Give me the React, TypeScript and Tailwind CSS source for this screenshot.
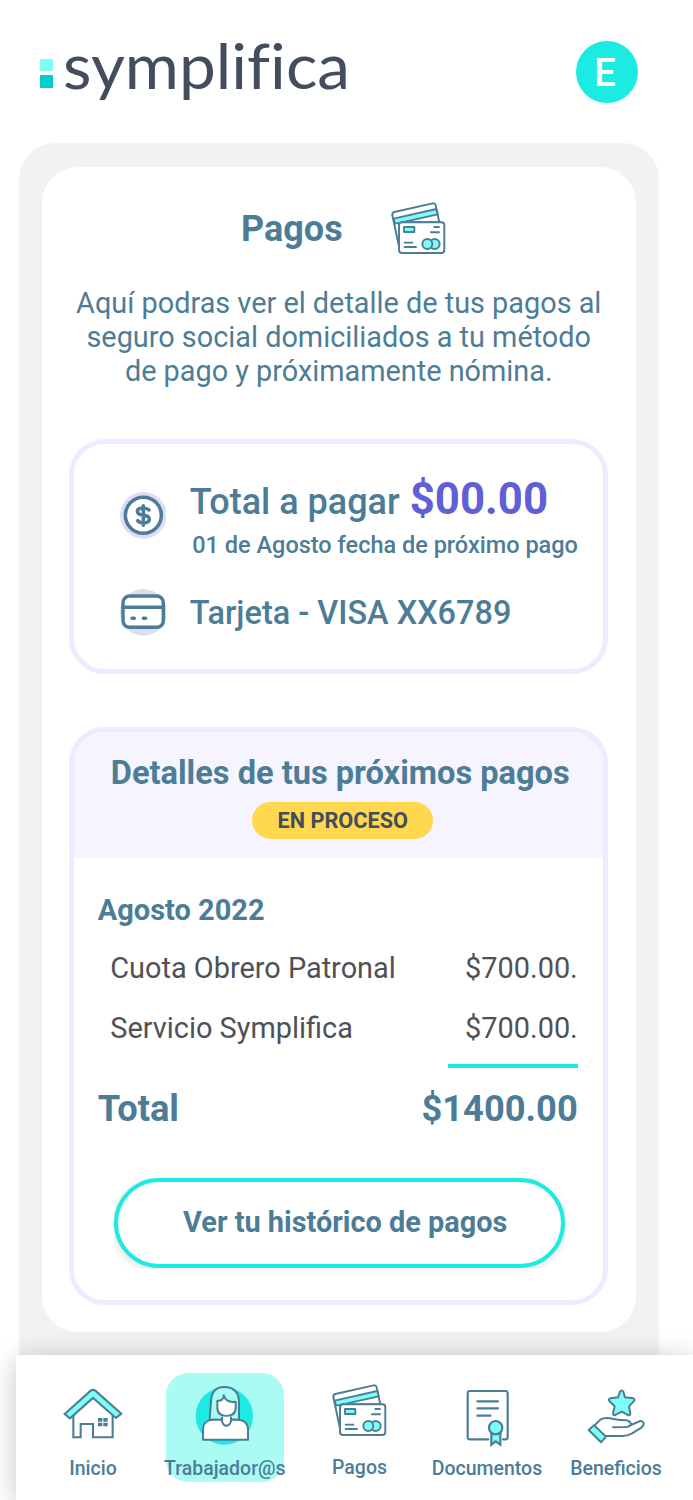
import type { ReactNode } from "react"

function CardsIcon() {
  return (
    <svg viewBox="33 36 165 157" className="w-[55px] h-[52.3px]" fill="none" stroke="#4d7d96" strokeWidth="5.8" strokeLinecap="round" strokeLinejoin="round">
      <path d="M60 184 L37 76 Q36 68 43 66 L158 40 Q165 39 167 46 L178 97 L57 97 Z" fill="#fff" />
      <path d="M41 86 L169 57 L173 73 L62 98 L45 101 Z" fill="#7dfff5" />
      <rect x="57" y="97" width="136" height="92" rx="9" fill="#fff" />
      <rect x="72" y="111" width="31" height="15" fill="#7dfff5" />
      <path d="M163 111 H177 M153 127 H177 M74 158 H97 M74 171 H108" />
      <circle cx="164" cy="162" r="15" fill="#7dfff5" />
      <circle cx="142" cy="162" r="15" fill="#7dfff5" />
    </svg>
  )
}

function HomeIcon() {
  return (
    <svg viewBox="190 262 180 154" className="w-[60px] h-[51.3px]" fill="none" stroke="#4d7d96" strokeWidth="6.2">
      <path d="M221 343 V410 H243 V370 H280 V410 H339 V343" />
      <path d="M195 340 L273 270 Q280 265 287 270 L365 339 L349 352 L280 292 L211 353 Z" fill="#7dfff5" />
      <path d="M295 352 H308 V363 H295 Z M311 352 H324 V363 H311 Z M295 366 H308 V377 H295 Z M311 366 H324 V377 H311 Z" fill="#4d7d96" stroke="none" />
    </svg>
  )
}

function WorkerIcon() {
  return (
    <svg viewBox="120 74 176 182" className="w-[58.7px] h-[60.7px]" fill="none" stroke="#4d7d96" strokeWidth="6" strokeLinejoin="round">
      <circle cx="208" cy="167" r="86" fill="#1cebe3" stroke="none" />
      <path d="M164 178 L168 121 C170 93 185 80 207 80 C235 80 250 94 252 121 V178 Z" fill="#a9fbf4" />
      <path d="M187 121 C198 123 207 116 206 105 C211 120 224 127 242 124 V146 C240 160 230 167 214 167 C199 167 189 160 187 146 Z" fill="#fff" />
      <path d="M144 238 V207 C144 188 157 178 174 178 H201 C201 187 206 195 214 196 C222 195 228 187 228 178 H247 C266 178 279 189 279 207 V238 Z" fill="#fff" />
      <path d="M201 169 V178 C201 187 206 195 214 196 C222 195 228 187 228 178 V169" fill="#fff" />
    </svg>
  )
}

function DocumentIcon() {
  return (
    <svg viewBox="124 88 132 176" className="w-[44px] h-[58.7px]" fill="none" stroke="#4d7d96" strokeWidth="6.6" strokeLinecap="round">
      <path d="M191 239 H135 Q129 239 129 233 V101 Q129 94 136 94 H242 Q249 94 249 101 V233 Q249 239 243 239 H235" />
      <path d="M158 125 H220 M158 146 H220 M158 168 H197" />
      <path d="M200 218 V255 L213 245 L227 255 V218 Z" fill="#7dfff5" />
      <circle cx="213" cy="204" r="20" fill="#7dfff5" />
    </svg>
  )
}

function BenefitsIcon() {
  return (
    <svg viewBox="98 266 176 166" className="w-[58.7px] h-[55.3px]" fill="none" stroke="#4d7d96" strokeWidth="6" strokeLinecap="round" strokeLinejoin="round">
      <path d="M197 274 Q202 267 207 274 L212 291 L237 294 Q244 297 238 303 L224 318 L228 340 Q227 347 220 344 L202 334 L183 344 Q176 346 176 339 L181 318 L165 302 Q161 296 168 294 L191 291 Z" fill="#7dfff5" />
      <path d="M121 375 L138 358 Q149 351 166 354 C184 357 195 360 216 360 Q229 362 230 374 L255 363 Q264 360 268 368 Q269 376 260 383 L232 400 Q219 407 205 407 H155" />
      <path d="M176 381 L216 380 Q228 379 230 372" />
      <path d="M103 389 L119 375 L155 409 L140 426 Z" fill="#7dfff5" />
    </svg>
  )
}

function DollarIcon() {
  return (
    <svg viewBox="179 185 140 140" className="w-[46.7px] h-[46.7px]" fill="none" stroke="#4d7d96" strokeWidth="10.5" strokeLinecap="round" strokeLinejoin="round">
      <circle cx="249" cy="255" r="70" fill="#dfdcf6" stroke="none" />
      <circle cx="249" cy="255" r="54" fill="#fff" />
      <path d="M266 239 C260 233 255 233 249 233 C237 233 231 237 231 243 C231 251 239 254 249 255 C260 256 267 260 267 267 C267 274 260 278 249 278 C241 278 236 276 232 271 M249 226 V285" />
    </svg>
  )
}

function CreditCardIcon() {
  return (
    <svg viewBox="179 477 140 140" className="w-[46.7px] h-[46.7px]" fill="none" stroke="#4d7d96" strokeWidth="10.5" strokeLinecap="round">
      <circle cx="249" cy="547" r="70" fill="#dfdcf6" stroke="none" />
      <rect x="188" y="498" width="121" height="94" rx="20" fill="#fff" />
      <path d="M188 532 H309 M215 565 H222 M249 565 H256" />
    </svg>
  )
}

function NavItem({ label, icon, className, iconClass }: { label: string; icon: ReactNode; className: string; iconClass: string }) {
  return (
    <a href="#" className={`flex h-[109px] shrink-0 flex-col items-center ${className}`}>
      <div className={`flex h-[82px] shrink-0 ${iconClass}`}>{icon}</div>
      <span className="whitespace-nowrap text-[19.5px] leading-[28px] font-medium">{label}</span>
    </a>
  )
}

const payments = [
  { name: "Cuota Obrero Patronal", amount: "$700.00." },
  { name: "Servicio Symplifica", amount: "$700.00." },
]

export default function App() {
  return (
    <div className="flex h-[1500px] w-[693px] flex-col overflow-hidden bg-white font-['Roboto',sans-serif] text-[#4d7d96]">
      <header className="flex h-[142.5px] shrink-0 items-start justify-between pl-[40px] pr-[55.5px]">
        <div className="flex items-start">
          <div className="mt-[59px] flex flex-col gap-[4px]">
            <span className="h-[12.3px] w-[12.7px] rounded-[1px] bg-[#7dfff5]" />
            <span className="h-[12.7px] w-[12.7px] rounded-[1px] bg-[#00cdcd]" />
          </div>
          <svg className="mt-[14px] ml-[8px] h-[110px] w-[300px]">
            <text
              x="2"
              y="75"
              textLength="287"
              lengthAdjust="spacingAndGlyphs"
              fontSize="62"
              fill="#434d5e"
              className="font-['Lato',sans-serif] [font-variant-ligatures:none]"
            >
              symplifica
            </text>
          </svg>
        </div>
        <div className="mt-[41px] flex h-[62px] w-[62px] items-center justify-center rounded-full bg-[#1cebe3] pt-[2px] pr-[3px] text-[38px] font-medium text-white">
          E
        </div>
      </header>

      <main className="ml-[18.5px] flex h-[1212.5px] w-[640.5px] shrink-0 flex-col rounded-t-[36px] bg-[#f2f2f2] pt-[24px] pl-[23.5px]">
        <div className="flex h-[1165.5px] w-[593.5px] flex-col items-center rounded-[36px] bg-white">
          <div className="flex h-[88.3px] w-full pl-[199px]">
            <h1 className="mt-[40.5px] w-[150px] text-[36px] leading-[44px] font-bold">Pagos</h1>
            <div className="mt-[35.3px]">
              <CardsIcon />
            </div>
          </div>
          <p className="mt-[31px] text-center text-[28.85px] leading-[34.2px] whitespace-nowrap">
            Aquí podras ver el detalle de tus pagos al
            <br />
            seguro social domiciliados a tu método
            <br />
            de pago y próximamente nómina.
          </p>

          <section className="mt-[51px] h-[234.5px] w-[539px] shrink-0 rounded-[36px] border-[5.5px] border-[#edebff] pl-[45.5px]">
            <div className="flex">
              <div className="mt-[47.5px] w-[70px] shrink-0">
                <DollarIcon />
              </div>
              <div className="mt-[29px] whitespace-nowrap font-medium">
                <div className="flex h-[52px] items-baseline gap-[10px] text-[36px] leading-[52px]">
                  Total a pagar
                  <span className="text-[43.8px] font-bold text-[#605fd5]">$00.00</span>
                </div>
                <div className="mt-[3.5px] ml-[2.5px] text-[23.5px] leading-[32px]">01 de Agosto fecha de próximo pago</div>
              </div>
            </div>
            <div className="mt-[28.5px] flex">
              <div className="w-[70px] shrink-0">
                <CreditCardIcon />
              </div>
              <div className="text-[32.45px] leading-[48px] font-medium whitespace-nowrap">Tarjeta - VISA XX6789</div>
            </div>
          </section>

          <section className="mt-[53px] flex h-[578px] w-[539px] shrink-0 flex-col overflow-hidden rounded-[36px] border-[5.5px] border-[#edebff]">
            <div className="flex h-[126px] shrink-0 flex-col items-center bg-[#f5f4ff] pt-[21px]">
              <h2 className="pl-[3px] text-[32.6px] leading-[40px] font-bold whitespace-nowrap">Detalles de tus próximos pagos</h2>
              <span className="mt-[9.5px] ml-[8px] flex h-[36.5px] w-[181px] items-center justify-center rounded-full bg-[#ffd84f] pt-[1px] text-[21.7px] font-bold text-[#434d5e]">
                EN PROCESO
              </span>
            </div>
            <div className="pr-[25.5px] pl-[23.5px]">
              <h3 className="mt-[32px] text-[29px] leading-[40px] font-bold">Agosto 2022</h3>
              <div className="pt-[18px] pl-[12.5px] text-[#505156]">
                {payments.map((payment) => (
                  <div key={payment.name} className="mb-[20.5px] flex justify-between text-[28.9px] leading-[40px]">
                    <span>{payment.name}</span>
                    <span>{payment.amount}</span>
                  </div>
                ))}
              </div>
              <div className="-mt-[4.5px] ml-auto h-[4px] w-[130px] bg-[#1cebe3]" />
              <div className="mt-[19px] flex justify-between text-[36.3px] leading-[44px] font-bold">
                <span>Total</span>
                <span>$1400.00</span>
              </div>
            </div>
            <div className="mt-[47px] ml-[39.5px] h-[90px] w-[451px] shrink-0 overflow-hidden">
              <button className="h-full w-full rounded-full border-[4px] border-[#1cebe3] bg-white pb-[1px] pl-[12px] text-[28.9px] font-bold shadow-[0_2px_8px_rgba(0,0,0,0.14)]">
                Ver tu histórico de pagos
              </button>
            </div>
          </section>
        </div>
      </main>

      <nav className="relative ml-[16px] flex h-[145px] shrink-0 bg-white pt-[18px] pl-[24px] shadow-[0_4px_26px_rgba(0,0,0,0.23)]">
        <NavItem label="Inicio" icon={<HomeIcon />} className="w-[106px]" iconClass="pt-[15px]" />
        <NavItem label="Trabajador@s" icon={<WorkerIcon />} className="ml-[20px] w-[117.5px] rounded-[22px] bg-[#a9fbf4]" iconClass="pt-[11.7px]" />
        <NavItem label="Pagos" icon={<CardsIcon />} className="-mt-[1.5px] ml-[26.5px] w-[99px]" iconClass="pt-[12.5px] pr-[1px]" />
        <NavItem label="Documentos" icon={<DocumentIcon />} className="ml-[22px] w-[112px]" iconClass="pt-[16.3px] pl-[2.5px]" />
        <NavItem label="Beneficios" icon={<BenefitsIcon />} className="ml-[26px] w-[94px]" iconClass="pt-[15.7px] pl-[1px]" />
      </nav>
    </div>
  )
}
